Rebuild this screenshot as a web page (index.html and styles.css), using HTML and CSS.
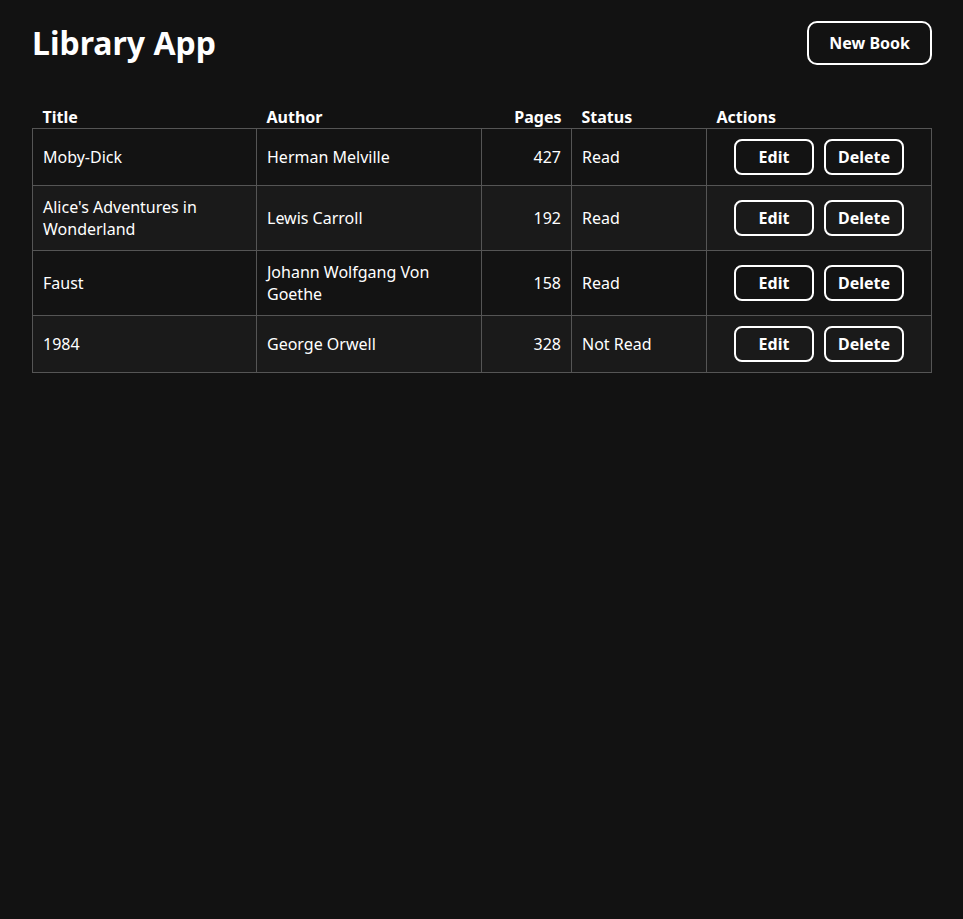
FILE: index.html
```html
<!DOCTYPE html>
<html lang="en">
<head>
<meta charset="utf-8">
<title>Library App</title>
<link rel="stylesheet" href="styles.css">
</head>
<body>
<main class="app">
  <header class="app-header">
    <h1 class="app-title">Library App</h1>
    <button class="btn btn-new">New Book</button>
  </header>
  <table class="books">
    <colgroup>
      <col class="c-title"><col class="c-author"><col class="c-pages"><col class="c-status"><col class="c-actions">
    </colgroup>
    <thead>
      <tr>
        <th>Title</th>
        <th>Author</th>
        <th class="num">Pages</th>
        <th>Status</th>
        <th>Actions</th>
      </tr>
    </thead>
    <tbody>
      <tr>
        <td>Moby-Dick</td>
        <td>Herman Melville</td>
        <td class="num">427</td>
        <td>Read</td>
        <td class="actions"><div class="action-group"><button class="btn btn-sm">Edit</button><button class="btn btn-sm">Delete</button></div></td>
      </tr>
      <tr>
        <td>Alice's Adventures in Wonderland</td>
        <td>Lewis Carroll</td>
        <td class="num">192</td>
        <td>Read</td>
        <td class="actions"><div class="action-group"><button class="btn btn-sm">Edit</button><button class="btn btn-sm">Delete</button></div></td>
      </tr>
      <tr>
        <td>Faust</td>
        <td>Johann Wolfgang Von Goethe</td>
        <td class="num">158</td>
        <td>Read</td>
        <td class="actions"><div class="action-group"><button class="btn btn-sm">Edit</button><button class="btn btn-sm">Delete</button></div></td>
      </tr>
      <tr>
        <td>1984</td>
        <td>George Orwell</td>
        <td class="num">328</td>
        <td>Not Read</td>
        <td class="actions"><div class="action-group"><button class="btn btn-sm">Edit</button><button class="btn btn-sm">Delete</button></div></td>
      </tr>
    </tbody>
  </table>
</main>
</body>
</html>
```

FILE: styles.css
```css
html, body {
  margin: 0;
  background: #121212;
  color: #fff;
  font-family: "Noto Sans", "Open Sans", sans-serif;
  font-size: 16px;
}

.app {
  padding: 21px 31px 21px 32px;
}

.app-header {
  display: flex;
  justify-content: space-between;
  align-items: center;
  margin-bottom: 41px;
}

.app-title {
  margin: 0;
  font-size: 32px;
  font-weight: 700;
  line-height: 44px;
}

.btn {
  font-family: inherit;
  font-weight: 700;
  font-size: 16px;
  color: #fff;
  background: transparent;
  border: 2px solid #fff;
  cursor: pointer;
}

.btn-new {
  height: 44px;
  padding: 0 20px;
  border-radius: 10px;
}

.books {
  width: 100%;
  border-collapse: collapse;
  table-layout: fixed;
}

.c-title { width: 224px; }
.c-author, .c-actions { width: 225px; }
.c-pages { width: 90px; }
.c-status { width: 135px; }

.books th {
  text-align: left;
  font-weight: 700;
  padding: 0 10px;
  line-height: 22px;
}

.books td {
  border: 1px solid #555;
  padding: 10px;
  line-height: 22px;
  vertical-align: middle;
}

.books tbody tr:nth-child(odd) { background: #131313; }
.books tbody tr:nth-child(even) { background: #1a1a1a; }

.books .num { text-align: right; }

.action-group {
  display: flex;
  justify-content: center;
  gap: 10px;
}

.btn-sm {
  width: 80px;
  height: 36px;
  padding: 0;
  border-radius: 8px;
}
```
